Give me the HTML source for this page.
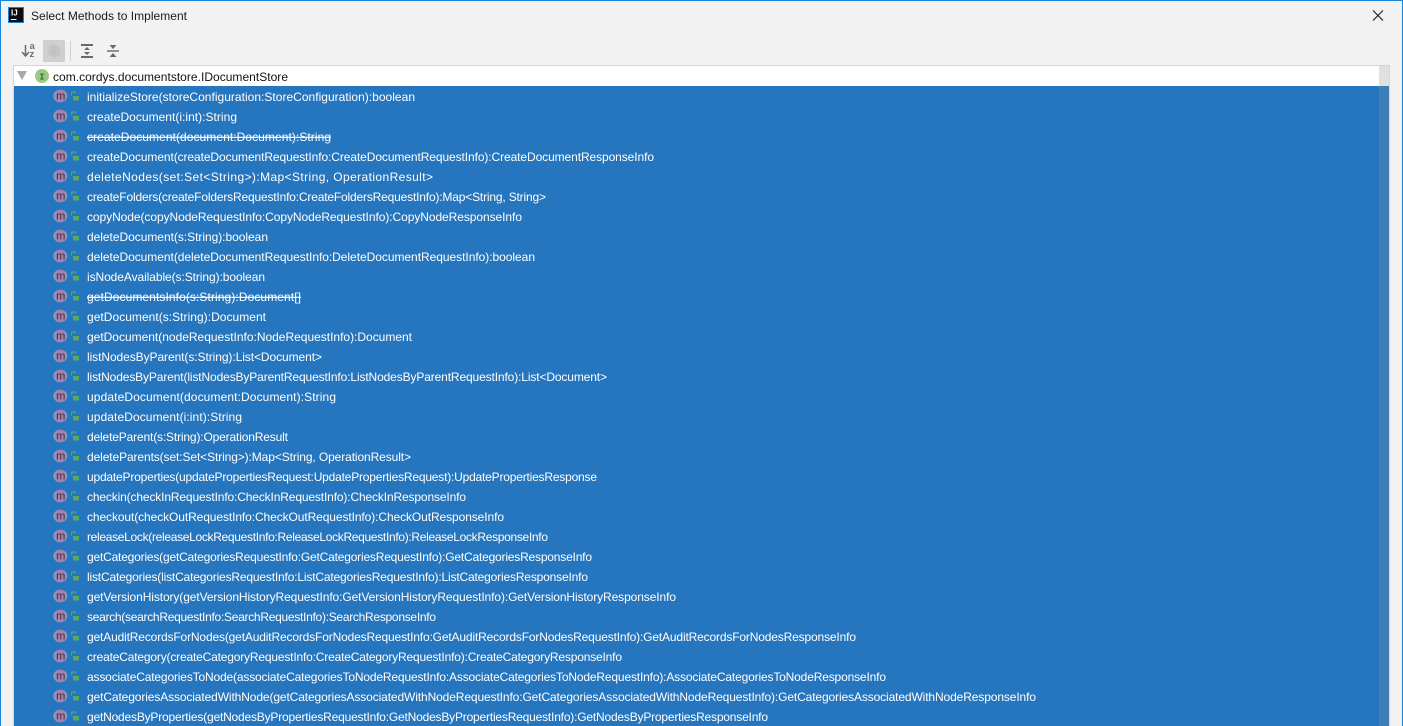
<!DOCTYPE html>
<html><head><meta charset="utf-8"><style>
html,body{margin:0;padding:0;width:1403px;height:726px;overflow:hidden;background:#f2f2f2}
svg{display:block}
text{font-family:"Liberation Sans",sans-serif;font-size:12px}
.r text{fill:#fff}
</style></head><body>
<svg width="1403" height="726" viewBox="0 0 1403 726" xmlns="http://www.w3.org/2000/svg">
<defs>
<g id="ic">
<ellipse cx="0.3" cy="0" rx="7" ry="6.3" fill="#7f9cc0"/>
<ellipse cx="0.7" cy="0" rx="5.2" ry="6.3" fill="#a781ae"/>
<text x="0.7" y="3.4" text-anchor="middle" style="font-size:11px;fill:#3f2c44">m</text>
<rect x="13" y="0" width="6" height="4.5" fill="#5aa765"/>
<path d="M11.6 -0.5V-2.6Q11.6 -4 13 -4H15.2V-2.5" stroke="#5aa765" stroke-width="1.2" fill="none"/>
</g>
</defs>
<rect x="0" y="0" width="1403" height="726" fill="#f2f2f2"/>
<rect x="0" y="0" width="1403" height="1" fill="#1883d7"/>
<rect x="0" y="0" width="1" height="726" fill="#1883d7"/>
<rect x="1402" y="0" width="1" height="726" fill="#1883d7"/>
<rect x="8" y="7" width="16" height="16" fill="#1883d7"/>
<rect x="9" y="8" width="14" height="14" fill="#0b0b10"/>
<text x="11" y="15.5" style="font-size:8px;font-weight:bold;fill:#fff">IJ</text>
<rect x="11" y="19" width="5.5" height="1" fill="#fff"/>
<text x="31" y="20" textLength="156" lengthAdjust="spacing" fill="#1a1a1a">Select Methods to Implement</text>
<path d="M1373 10.5L1383 20.5M1383 10.5L1373 20.5" stroke="#222" stroke-width="1.2"/>

<path d="M25.5 45V55.5M22 52L25.5 56L29 52" stroke="#6a6a6a" stroke-width="1.5" fill="none"/>
<text x="29.5" y="49" style="font-size:9.5px;font-weight:bold;fill:#6e6e6e">a</text>
<text x="29.5" y="57" style="font-size:9.5px;font-weight:bold;fill:#6e6e6e">z</text>
<rect x="43" y="40" width="22" height="22" rx="1" fill="#cfcfcf"/>
<circle cx="54" cy="51" r="6.5" fill="#c5c5c5"/>
<text x="54" y="54" text-anchor="middle" style="font-size:8px;fill:#b2b2b2">c</text>
<rect x="70" y="41" width="1" height="20" fill="#d0d0d0"/>
<path d="M81 45H93M81 57H93" stroke="#6a6a6a" stroke-width="2"/>
<path d="M87 47L90 50H84ZM87 55L84 52H90Z" fill="#6a6a6a"/>
<path d="M107 51H119" stroke="#6a6a6a" stroke-width="1.4"/>
<path d="M113 49L109.5 45H116.5ZM113 53L109.5 57H116.5Z" fill="#6a6a6a"/>

<rect x="13" y="65" width="1377" height="661" fill="#d6d6d6"/>
<rect x="14" y="66" width="1375" height="20" fill="#fff"/>
<rect x="14" y="86" width="1375" height="640" fill="#2675bf"/>
<rect x="1379" y="66" width="10" height="20" fill="#e0e0e0"/>
<rect x="1379" y="86" width="10" height="640" fill="#3f7fb8"/>
<path d="M17 71H27L22 80Z" fill="#a8a8a8"/>
<circle cx="42" cy="76" r="7" fill="#99c985"/>
<text x="42" y="79.5" text-anchor="middle" style="font-family:'Liberation Mono',monospace;font-size:9px;font-weight:bold;fill:#3d6b35">I</text>
<text x="53" y="81" textLength="235" lengthAdjust="spacing" fill="#111">com.cordys.documentstore.IDocumentStore</text>

<g class="r">
<use href="#ic" x="60" y="96"/><text x="87" y="101" textLength="328" lengthAdjust="spacing">initializeStore(storeConfiguration:StoreConfiguration):boolean</text>
<use href="#ic" x="60" y="116"/><text x="87" y="121" textLength="150" lengthAdjust="spacing">createDocument(i:int):String</text>
<use href="#ic" x="60" y="136"/><text x="87" y="141" textLength="244" lengthAdjust="spacing" text-decoration="line-through">createDocument(document:Document):String</text>
<use href="#ic" x="60" y="156"/><text x="87" y="161" textLength="567" lengthAdjust="spacing">createDocument(createDocumentRequestInfo:CreateDocumentRequestInfo):CreateDocumentResponseInfo</text>
<use href="#ic" x="60" y="176"/><text x="87" y="181" textLength="346" lengthAdjust="spacing">deleteNodes(set:Set&lt;String&gt;):Map&lt;String, OperationResult&gt;</text>
<use href="#ic" x="60" y="196"/><text x="87" y="201" textLength="459" lengthAdjust="spacing">createFolders(createFoldersRequestInfo:CreateFoldersRequestInfo):Map&lt;String, String&gt;</text>
<use href="#ic" x="60" y="216"/><text x="87" y="221" textLength="435" lengthAdjust="spacing">copyNode(copyNodeRequestInfo:CopyNodeRequestInfo):CopyNodeResponseInfo</text>
<use href="#ic" x="60" y="236"/><text x="87" y="241" textLength="181" lengthAdjust="spacing">deleteDocument(s:String):boolean</text>
<use href="#ic" x="60" y="256"/><text x="87" y="261" textLength="448" lengthAdjust="spacing">deleteDocument(deleteDocumentRequestInfo:DeleteDocumentRequestInfo):boolean</text>
<use href="#ic" x="60" y="276"/><text x="87" y="281" textLength="178" lengthAdjust="spacing">isNodeAvailable(s:String):boolean</text>
<use href="#ic" x="60" y="296"/><text x="87" y="301" textLength="214" lengthAdjust="spacing" text-decoration="line-through">getDocumentsInfo(s:String):Document[]</text>
<use href="#ic" x="60" y="316"/><text x="87" y="321" textLength="179" lengthAdjust="spacing">getDocument(s:String):Document</text>
<use href="#ic" x="60" y="336"/><text x="87" y="341" textLength="325" lengthAdjust="spacing">getDocument(nodeRequestInfo:NodeRequestInfo):Document</text>
<use href="#ic" x="60" y="356"/><text x="87" y="361" textLength="235" lengthAdjust="spacing">listNodesByParent(s:String):List&lt;Document&gt;</text>
<use href="#ic" x="60" y="376"/><text x="87" y="381" textLength="520" lengthAdjust="spacing">listNodesByParent(listNodesByParentRequestInfo:ListNodesByParentRequestInfo):List&lt;Document&gt;</text>
<use href="#ic" x="60" y="396"/><text x="87" y="401" textLength="249" lengthAdjust="spacing">updateDocument(document:Document):String</text>
<use href="#ic" x="60" y="416"/><text x="87" y="421" textLength="155" lengthAdjust="spacing">updateDocument(i:int):String</text>
<use href="#ic" x="60" y="436"/><text x="87" y="441" textLength="201" lengthAdjust="spacing">deleteParent(s:String):OperationResult</text>
<use href="#ic" x="60" y="456"/><text x="87" y="461" textLength="324" lengthAdjust="spacing">deleteParents(set:Set&lt;String&gt;):Map&lt;String, OperationResult&gt;</text>
<use href="#ic" x="60" y="476"/><text x="87" y="481" textLength="510" lengthAdjust="spacing">updateProperties(updatePropertiesRequest:UpdatePropertiesRequest):UpdatePropertiesResponse</text>
<use href="#ic" x="60" y="496"/><text x="87" y="501" textLength="379" lengthAdjust="spacing">checkin(checkInRequestInfo:CheckInRequestInfo):CheckInResponseInfo</text>
<use href="#ic" x="60" y="516"/><text x="87" y="521" textLength="417" lengthAdjust="spacing">checkout(checkOutRequestInfo:CheckOutRequestInfo):CheckOutResponseInfo</text>
<use href="#ic" x="60" y="536"/><text x="87" y="541" textLength="461" lengthAdjust="spacing">releaseLock(releaseLockRequestInfo:ReleaseLockRequestInfo):ReleaseLockResponseInfo</text>
<use href="#ic" x="60" y="556"/><text x="87" y="561" textLength="505" lengthAdjust="spacing">getCategories(getCategoriesRequestInfo:GetCategoriesRequestInfo):GetCategoriesResponseInfo</text>
<use href="#ic" x="60" y="576"/><text x="87" y="581" textLength="501" lengthAdjust="spacing">listCategories(listCategoriesRequestInfo:ListCategoriesRequestInfo):ListCategoriesResponseInfo</text>
<use href="#ic" x="60" y="596"/><text x="87" y="601" textLength="589" lengthAdjust="spacing">getVersionHistory(getVersionHistoryRequestInfo:GetVersionHistoryRequestInfo):GetVersionHistoryResponseInfo</text>
<use href="#ic" x="60" y="616"/><text x="87" y="621" textLength="349" lengthAdjust="spacing">search(searchRequestInfo:SearchRequestInfo):SearchResponseInfo</text>
<use href="#ic" x="60" y="636"/><text x="87" y="641" textLength="769" lengthAdjust="spacing">getAuditRecordsForNodes(getAuditRecordsForNodesRequestInfo:GetAuditRecordsForNodesRequestInfo):GetAuditRecordsForNodesResponseInfo</text>
<use href="#ic" x="60" y="656"/><text x="87" y="661" textLength="535" lengthAdjust="spacing">createCategory(createCategoryRequestInfo:CreateCategoryRequestInfo):CreateCategoryResponseInfo</text>
<use href="#ic" x="60" y="676"/><text x="87" y="681" textLength="799" lengthAdjust="spacing">associateCategoriesToNode(associateCategoriesToNodeRequestInfo:AssociateCategoriesToNodeRequestInfo):AssociateCategoriesToNodeResponseInfo</text>
<use href="#ic" x="60" y="696"/><text x="87" y="701" textLength="949" lengthAdjust="spacing">getCategoriesAssociatedWithNode(getCategoriesAssociatedWithNodeRequestInfo:GetCategoriesAssociatedWithNodeRequestInfo):GetCategoriesAssociatedWithNodeResponseInfo</text>
<use href="#ic" x="60" y="716"/><text x="87" y="721" textLength="681" lengthAdjust="spacing">getNodesByProperties(getNodesByPropertiesRequestInfo:GetNodesByPropertiesRequestInfo):GetNodesByPropertiesResponseInfo</text>
</g>
</svg>
</body></html>
